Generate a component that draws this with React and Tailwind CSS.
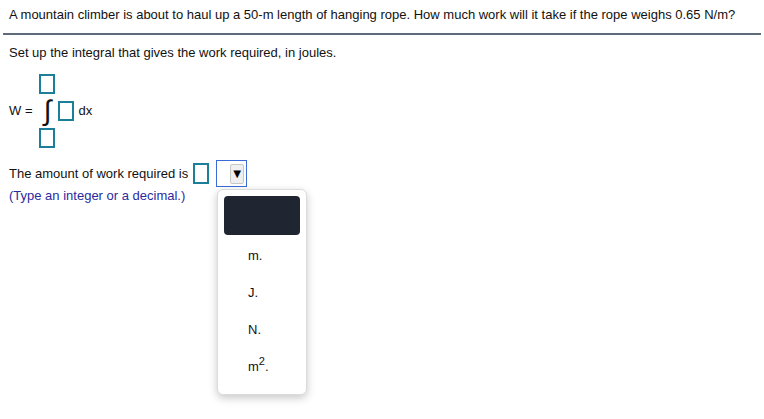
const AnswerBox = ({ className = '' }) => (
  <span className={`inline-block w-[16px] h-[20px] border-2 border-[#1b7f99] bg-white ${className}`}></span>
);

const units = [
  { key: 'm', label: 'm.' },
  { key: 'J', label: 'J.' },
  { key: 'N', label: 'N.' },
  { key: 'm2', label: <>m<sup className="text-[11px] relative -top-[6px]">2</sup>.</> },
];

export default function App() {
  return (
    <div className="w-[764px] h-[419px] bg-white text-[13px] text-[#111] font-['Liberation_Sans',Arial,sans-serif] relative overflow-hidden">
      {/* Question */}
      <div className="px-[9px] pt-[7px] leading-[15px]">
        A mountain climber is about to haul up a 50-m length of hanging rope. How much work will it take if the rope weighs 0.65 N/m?
      </div>
      <div className="mx-[3px] mt-[11px] h-[2px] bg-[#5f6b78]"></div>

      <div className="px-[9px] mt-[10px] leading-[15px]">Set up the integral that gives the work required, in joules.</div>

      {/* Integral */}
      <div className="flex items-center pl-[9px] mt-[14px]">
        <span className="mr-[6px]">W =</span>
        <div className="flex flex-col items-center w-[18px]">
          <AnswerBox />
          <div className="h-[34px] flex items-center justify-center overflow-visible">
            <span className="font-['Liberation_Sans',Arial,sans-serif] text-[28px] leading-[28px] font-light">∫</span>
          </div>
          <AnswerBox />
        </div>
        <AnswerBox className="ml-[2px]" />
        <span className="ml-[4px]">dx</span>
      </div>

      {/* Answer row */}
      <div className="flex items-center pl-[9px] mt-[12px]">
        <span>The amount of work required is</span>
        <AnswerBox className="ml-[5px] !h-[21px]" />
        <div className="ml-[7px] w-[31px] h-[27px] border-[1.5px] border-[#3a6bd6] flex items-center justify-end pr-[2px]">
          <div className="w-[14px] h-[20px] bg-[#efefef] border border-[#c8c8c8] rounded-[2px] flex items-center justify-center">
            <span className="text-[13px] leading-none text-black">▼</span>
          </div>
        </div>
      </div>
      <div className="pl-[9px] mt-[1px] text-[#2b2ba0] leading-[15px]">(Type an integer or a decimal.)</div>

      {/* Dropdown menu */}
      <div className="absolute left-[217px] top-[189px] w-[90px] h-[206px] bg-white border border-[#dcdcdc] rounded-[6px] shadow-[0_3px_8px_rgba(0,0,0,0.22)] px-[6px] pt-[6px]">
        <div className="h-[39px] bg-[#1f2531] rounded-[4px]"></div>
        <ul className="mt-[13px]">
          {units.map((u) => (
            <li key={u.key} className="h-[37px] pl-[24px] leading-[15px]">{u.label}</li>
          ))}
        </ul>
      </div>
    </div>
  );
}
